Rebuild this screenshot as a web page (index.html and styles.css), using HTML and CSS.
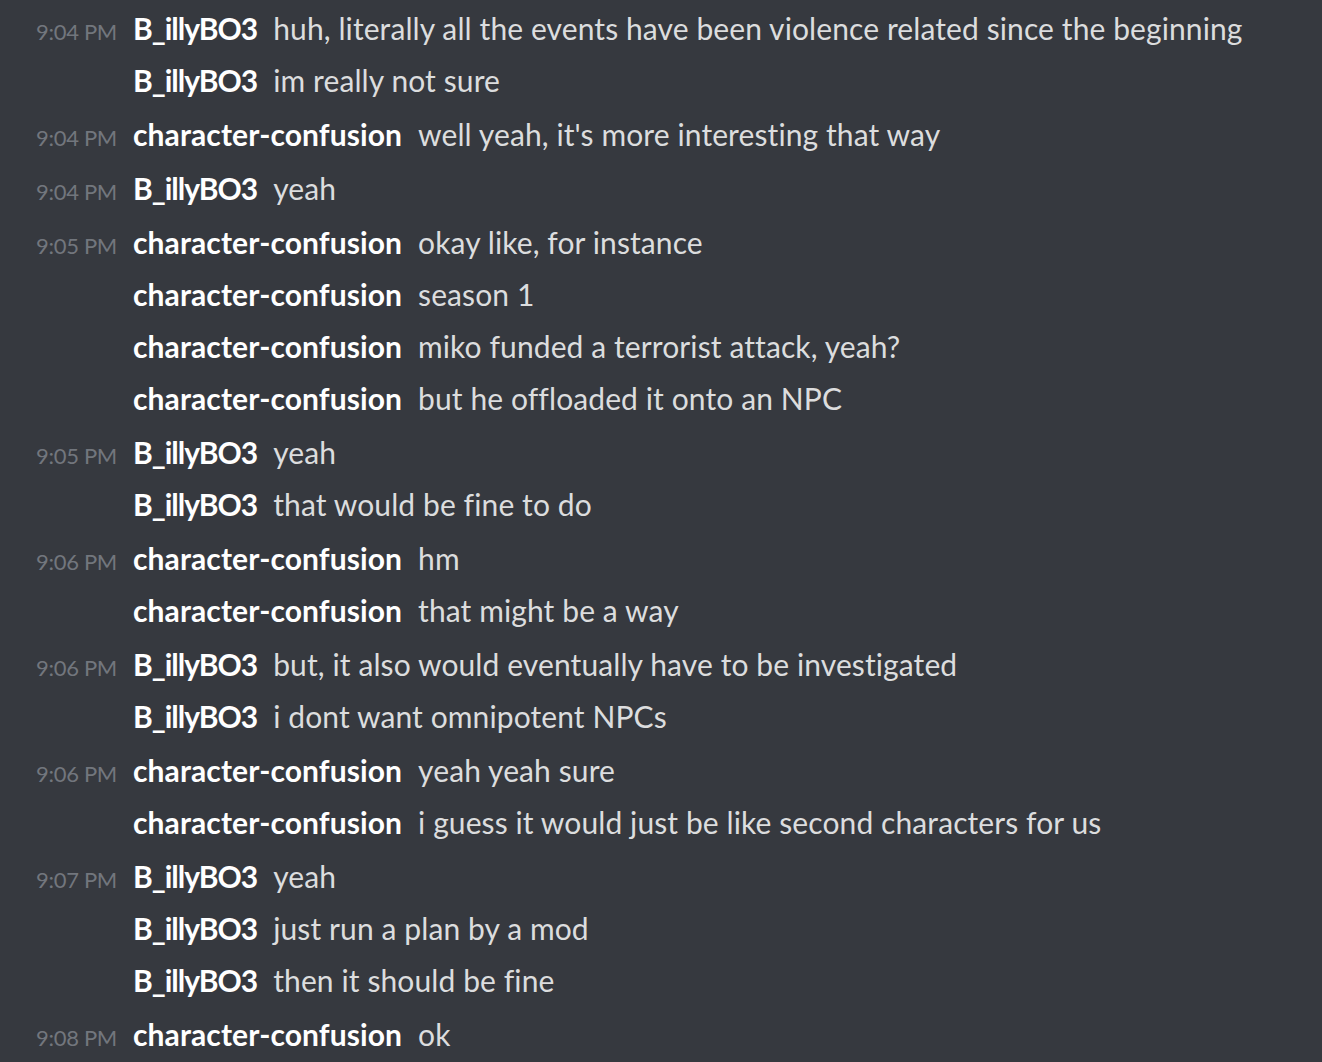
FILE: index.html
```html
<!DOCTYPE html>
<html>
<head>
<meta charset="utf-8">
<link rel="stylesheet" href="styles.css">
</head>
<body>
<div class="chat">
  <div class="group">
    <div class="msg"><span class="time">9:04 PM</span><span class="name billy">B_illyBO3</span><span class="text">huh, literally all the events have been violence related since the beginning</span></div>
    <div class="msg"><span class="time"></span><span class="name billy">B_illyBO3</span><span class="text">im really not sure</span></div>
  </div>
  <div class="group">
    <div class="msg"><span class="time">9:04 PM</span><span class="name">character-confusion</span><span class="text">well yeah, it's more interesting that way</span></div>
  </div>
  <div class="group">
    <div class="msg"><span class="time">9:04 PM</span><span class="name billy">B_illyBO3</span><span class="text">yeah</span></div>
  </div>
  <div class="group">
    <div class="msg"><span class="time">9:05 PM</span><span class="name">character-confusion</span><span class="text">okay like, for instance</span></div>
    <div class="msg"><span class="time"></span><span class="name">character-confusion</span><span class="text">season 1</span></div>
    <div class="msg"><span class="time"></span><span class="name">character-confusion</span><span class="text">miko funded a terrorist attack, yeah?</span></div>
    <div class="msg"><span class="time"></span><span class="name">character-confusion</span><span class="text">but he offloaded it onto an NPC</span></div>
  </div>
  <div class="group">
    <div class="msg"><span class="time">9:05 PM</span><span class="name billy">B_illyBO3</span><span class="text">yeah</span></div>
    <div class="msg"><span class="time"></span><span class="name billy">B_illyBO3</span><span class="text">that would be fine to do</span></div>
  </div>
  <div class="group">
    <div class="msg"><span class="time">9:06 PM</span><span class="name">character-confusion</span><span class="text">hm</span></div>
    <div class="msg"><span class="time"></span><span class="name">character-confusion</span><span class="text">that might be a way</span></div>
  </div>
  <div class="group">
    <div class="msg"><span class="time">9:06 PM</span><span class="name billy">B_illyBO3</span><span class="text">but, it also would eventually have to be investigated</span></div>
    <div class="msg"><span class="time"></span><span class="name billy">B_illyBO3</span><span class="text">i dont want omnipotent NPCs</span></div>
  </div>
  <div class="group">
    <div class="msg"><span class="time">9:06 PM</span><span class="name">character-confusion</span><span class="text">yeah yeah sure</span></div>
    <div class="msg"><span class="time"></span><span class="name">character-confusion</span><span class="text">i guess it would just be like second characters for us</span></div>
  </div>
  <div class="group">
    <div class="msg"><span class="time">9:07 PM</span><span class="name billy">B_illyBO3</span><span class="text">yeah</span></div>
    <div class="msg"><span class="time"></span><span class="name billy">B_illyBO3</span><span class="text">just run a plan by a mod</span></div>
    <div class="msg"><span class="time"></span><span class="name billy">B_illyBO3</span><span class="text">then it should be fine</span></div>
  </div>
  <div class="group">
    <div class="msg"><span class="time">9:08 PM</span><span class="name">character-confusion</span><span class="text">ok</span></div>
  </div>
</div>
</body>
</html>
```
FILE: styles.css
```css
html, body {
  margin: 0;
  padding: 0;
  background: #36393f;
  height: 100%;
  overflow: hidden;
}
.chat {
  padding-top: 0;
  font-family: "Lato", "Noto Sans", sans-serif;
}
.group {
  margin-top: 2px;
}
.msg {
  display: flex;
  align-items: baseline;
  height: 52px;
  line-height: 52px;
  white-space: nowrap;
}
.time {
  width: 117px;
  flex: none;
  text-align: right;
  font-size: 22px;
  color: #72767d;
  letter-spacing: -0.3px;
}
.name {
  margin-left: 16px;
  font-size: 30px;
  font-weight: 700;
  color: #ffffff;
  letter-spacing: 0.1px;
}
.name.billy {
  letter-spacing: -1px;
}
.text {
  margin-left: 16px;
  font-size: 30px;
  color: #dcddde;
  letter-spacing: 0.1px;
}
```
